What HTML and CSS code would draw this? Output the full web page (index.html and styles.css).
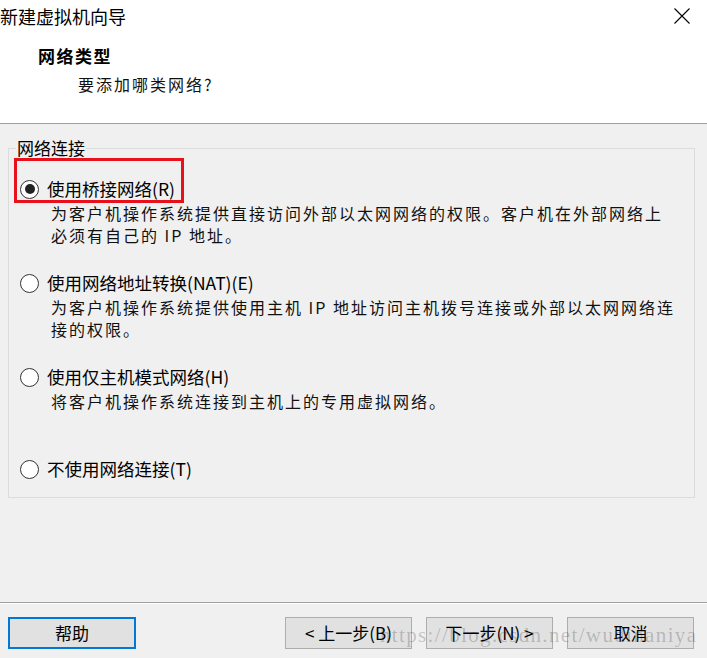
FILE: index.html
```html
<!DOCTYPE html>
<html lang="zh-CN">
<head>
<meta charset="utf-8">
<title>新建虚拟机向导</title>
<link rel="stylesheet" href="styles.css">
</head>
<body>
<div class="window">
  <header class="header">
    <div class="titlebar">
      <span class="title">新建虚拟机向导</span>
      <svg class="close" width="16" height="16" viewBox="0 0 16 16"><path d="M0.5 0.5 L15.5 15.5 M15.5 0.5 L0.5 15.5" stroke="#000" stroke-width="1.1" fill="none"/></svg>
    </div>
    <div class="heading">网络类型</div>
    <div class="subheading">要添加哪类网络?</div>
  </header>
  <main class="main">
    <fieldset class="group">
      <legend class="legend">网络连接</legend>
      <div class="option">
        <div class="row"><span class="radio checked"></span><span class="label">使用桥接网络(R)</span></div>
        <div class="desc">为客户机操作系统提供直接访问外部以太网网络的权限。客户机在外部网络上<br>必须有自己的 IP 地址。</div>
        <div class="highlight"></div>
      </div>
      <div class="option">
        <div class="row"><span class="radio"></span><span class="label">使用网络地址转换(NAT)(E)</span></div>
        <div class="desc">为客户机操作系统提供使用主机 IP 地址访问主机拨号连接或外部以太网网络连<br>接的权限。</div>
      </div>
      <div class="option">
        <div class="row"><span class="radio"></span><span class="label">使用仅主机模式网络(H)</span></div>
        <div class="desc">将客户机操作系统连接到主机上的专用虚拟网络。</div>
      </div>
      <div class="option last">
        <div class="row"><span class="radio"></span><span class="label">不使用网络连接(T)</span></div>
      </div>
    </fieldset>
  </main>
  <footer class="footer">
    <button class="btn btn-help">帮助</button>
    <div class="nav">
      <button class="btn">&lt; 上一步(B)</button>
      <button class="btn">下一步(N) &gt;</button>
      <button class="btn">取消</button>
    </div>
    <div class="watermark">https://blog.csdn.net/wudinaniya</div>
  </footer>
</div>
</body>
</html>
```

FILE: styles.css
```css
* { box-sizing: border-box; }
html, body { margin: 0; padding: 0; }
body {
  width: 707px;
  height: 658px;
  overflow: hidden;
  background: #f0f0f0;
  font-family: "Noto Sans CJK SC", "Noto Sans", sans-serif;
  color: #000;
}
.window {
  width: 707px;
  height: 658px;
  display: flex;
  flex-direction: column;
}
.header {
  height: 124px;
  background: #fff;
  border-bottom: 1px solid #a0a0a0;
  flex: none;
}
.titlebar {
  height: 32px;
  display: flex;
  align-items: center;
  justify-content: space-between;
  padding-right: 17px;
}
.title {
  font-size: 18px;
  line-height: 32px;
}
.close { display: block; }
.heading {
  margin-top: 12px;
  padding-left: 38px;
  font-size: 17px;
  font-weight: 700;
  letter-spacing: 1.5px;
  line-height: 24px;
}
.subheading {
  margin-top: 4px;
  padding-left: 78px;
  font-size: 16px;
  letter-spacing: 2px;
  line-height: 24px;
  color: #111;
}
.main {
  flex: 1;
  padding: 14px 0 0 8px;
}
.group {
  width: 687px;
  margin: 0;
  padding: 0 0 16px 11px;
  border: 1px solid #dcdcdc;
  min-inline-size: 0;
}
.legend {
  margin-left: -4px;
  padding: 0 1px;
  font-size: 17px;
  line-height: 20px;
  color: #000;
}
.option {
  position: relative;
  margin-top: 25px;
  min-height: 69px;
}
.option:first-of-type { margin-top: 19px; }
.option.last { min-height: 24px; margin-top: 23px; }
.row {
  height: 24px;
  display: flex;
  align-items: center;
}
.radio {
  width: 19px;
  height: 19px;
  border: 1px solid #333;
  border-radius: 50%;
  background: #fff;
  flex: none;
  display: flex;
  align-items: center;
  justify-content: center;
}
.radio.checked::after {
  content: "";
  width: 10px;
  height: 10px;
  border-radius: 50%;
  background: #222;
}
.label {
  margin-left: 8px;
  font-size: 17.5px;
  line-height: 24px;
  white-space: nowrap;
}
.desc {
  margin-top: 1px;
  margin-left: 31px;
  font-size: 16px;
  letter-spacing: 2px;
  line-height: 22px;
  color: #111;
  white-space: nowrap;
}
.highlight {
  position: absolute;
  left: -6px;
  top: -19px;
  width: 170px;
  height: 45px;
  border: 3px solid #e8101a;
}
.footer {
  position: relative;
  height: 56px;
  flex: none;
  border-top: 1px solid #a0a0a0;
  box-shadow: inset 0 1px 0 #fff;
  display: flex;
  align-items: flex-start;
  justify-content: space-between;
  padding: 14px 13px 0 8px;
}
.nav {
  display: flex;
  gap: 14px;
}
.btn {
  width: 127px;
  height: 32px;
  margin: 0;
  padding: 0;
  background: #e1e1e1;
  border: 1px solid #adadad;
  font-family: "Noto Sans CJK SC", "Noto Sans", sans-serif;
  font-size: 17px;
  color: #000;
  line-height: 28px;
}
.btn-help {
  width: 128px;
  border: 2px solid #0078d7;
}
.watermark {
  position: absolute;
  left: 380px;
  top: 20px;
  font-family: "Liberation Serif", serif;
  font-size: 21px;
  letter-spacing: 1.35px;
  line-height: 24px;
  color: rgba(0, 0, 0, 0.2);
  white-space: nowrap;
  pointer-events: none;
}
```
